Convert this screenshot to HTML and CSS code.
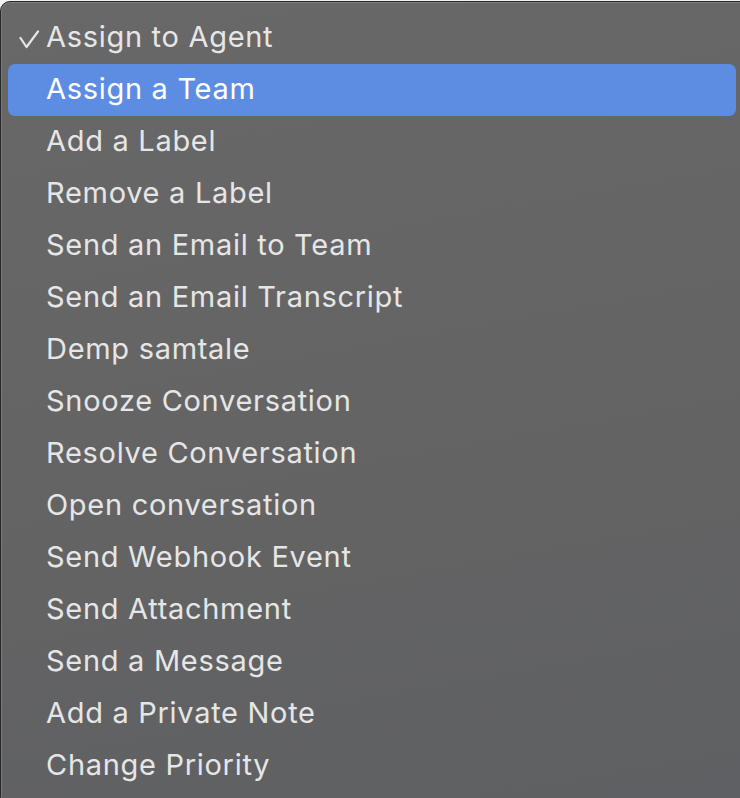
FILE: index.html
```html
<!DOCTYPE html>
<html>
<head>
<meta charset="utf-8">
<link rel="stylesheet" href="styles.css">
</head>
<body>
<div class="menu">
  <ul class="items">
    <li class="item"><svg class="check" width="22" height="20" viewBox="0 0 22 20"><polyline points="1.5,8 7.5,17 19,1.5" fill="none" stroke="#e6e6e6" stroke-width="2.2" stroke-linecap="round" stroke-linejoin="round"/></svg><span>Assign to Agent</span></li>
    <li class="item active"><span>Assign a Team</span></li>
    <li class="item"><span>Add a Label</span></li>
    <li class="item"><span>Remove a Label</span></li>
    <li class="item"><span>Send an Email to Team</span></li>
    <li class="item"><span>Send an Email Transcript</span></li>
    <li class="item"><span>Demp samtale</span></li>
    <li class="item"><span>Snooze Conversation</span></li>
    <li class="item"><span>Resolve Conversation</span></li>
    <li class="item"><span>Open conversation</span></li>
    <li class="item"><span>Send Webhook Event</span></li>
    <li class="item"><span>Send Attachment</span></li>
    <li class="item"><span>Send a Message</span></li>
    <li class="item"><span>Add a Private Note</span></li>
    <li class="item"><span>Change Priority</span></li>
  </ul>
</div>
</body>
</html>
```
FILE: styles.css
```css
html, body {
  margin: 0;
  padding: 0;
  background: #f2f2f2;
  overflow: hidden;
  width: 740px;
  height: 798px;
}
.menu {
  width: 760px;
  height: 806px;
  margin-top: 1px;
  box-sizing: border-box;
  border: 1px solid #262626;
  border-radius: 10px;
  background: linear-gradient(170deg, #686868 0%, #646464 50%, #5f6063 100%);
  box-shadow: inset 0 1px 0 #808080, inset 1px 0 0 #7a7a7a;
  padding-top: 10px;
}
.items {
  list-style: none;
  margin: 0;
  padding: 0 23px 0 7px;
}
.item {
  position: relative;
  height: 52px;
  box-sizing: border-box;
  display: flex;
  align-items: center;
  padding-left: 38px;
  padding-bottom: 3px;
  border-radius: 7px;
  font-family: "Inter", "Noto Sans", sans-serif;
  font-size: 29px;
  color: #e6e6e6;
  letter-spacing: 0.7px;
}
.item.active {
  background: #5d8de3;
  color: #ffffff;
}
.check {
  position: absolute;
  left: 11px;
  top: 18px;
}
```
